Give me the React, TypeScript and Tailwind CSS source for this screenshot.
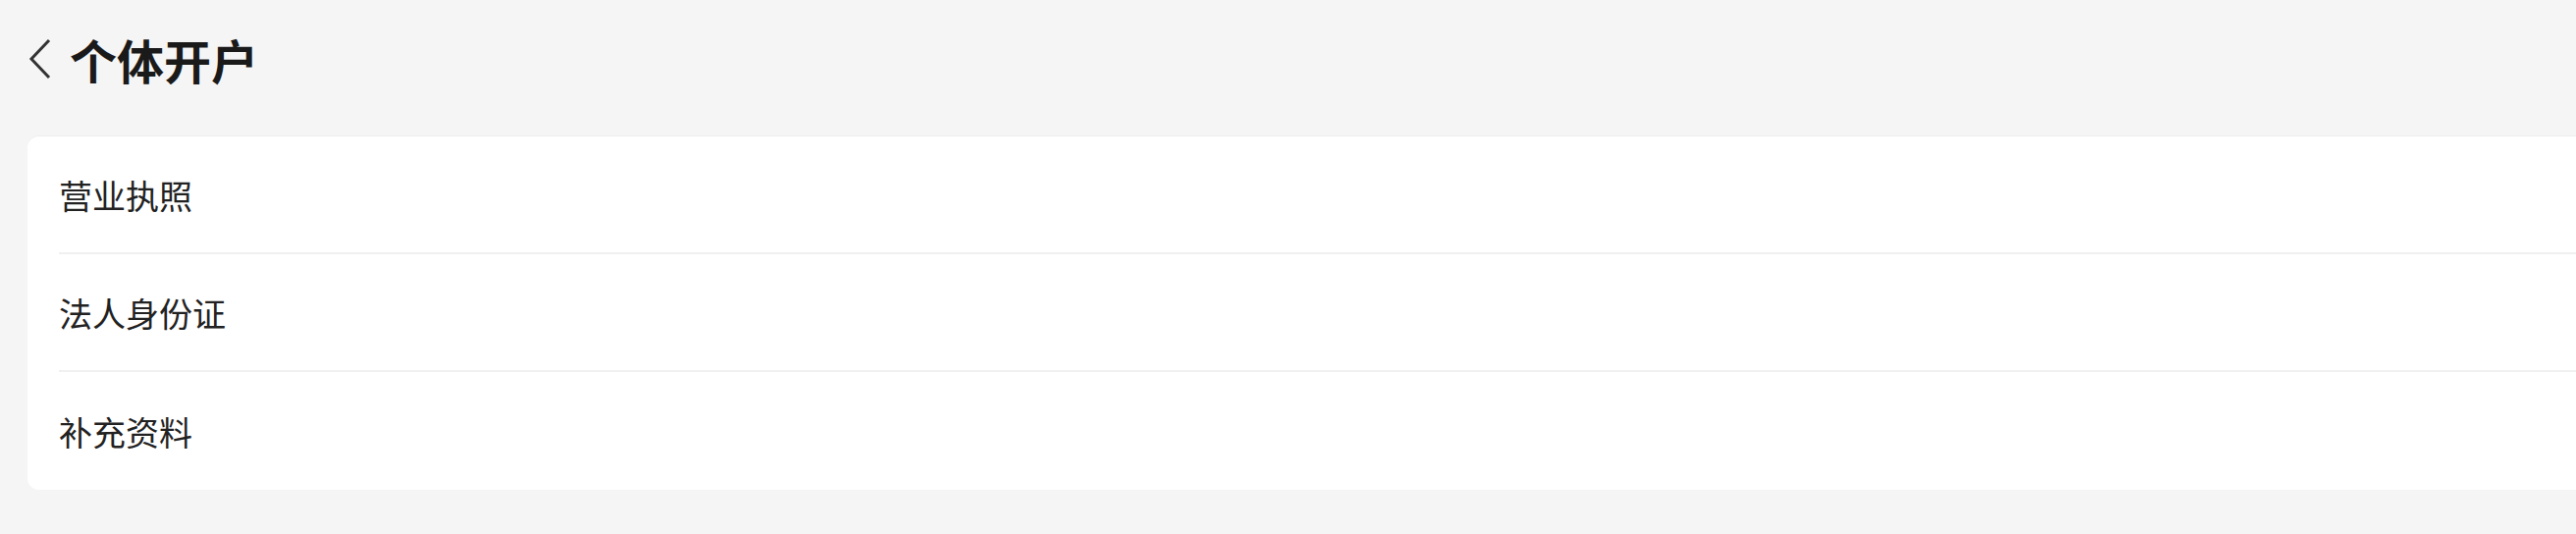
import React from "react";

const items = ["营业执照", "法人身份证", "补充资料"];

export default function App() {
  return (
    <div
      className="w-[2624px] h-[544px] bg-[#f5f5f5] overflow-hidden"
      style={{ fontFamily: '"Noto Sans CJK SC", "Noto Sans", sans-serif' }}
    >
      <div className="h-[138px] flex items-start pt-[36px] pl-[28px]">
        <div className="h-[48px] flex items-center">
          <svg width="26" height="42" viewBox="0 0 26 42" className="mr-[17px]">
            <path d="M22 2 L4 21 L22 40" fill="none" stroke="#333333" strokeWidth="3" strokeLinejoin="miter" />
          </svg>
          <h1 className="text-[48px] leading-[48px] font-bold text-[#1a1a1a]">个体开户</h1>
        </div>
      </div>
      <div className="ml-[28px] bg-white rounded-l-[12px] border-t border-[#eeeeee]">
        {items.map((t, i) => (
          <div key={t} className="pl-[32px]">
            <div
              className={
                "h-[120px] flex items-center " +
                (i < items.length - 1 ? "border-b-2 border-[#f0f0f0]" : "")
              }
            >
              <span className="text-[34px] leading-none text-[#222222] pt-[2px]">{t}</span>
            </div>
          </div>
        ))}
      </div>
    </div>
  );
}
